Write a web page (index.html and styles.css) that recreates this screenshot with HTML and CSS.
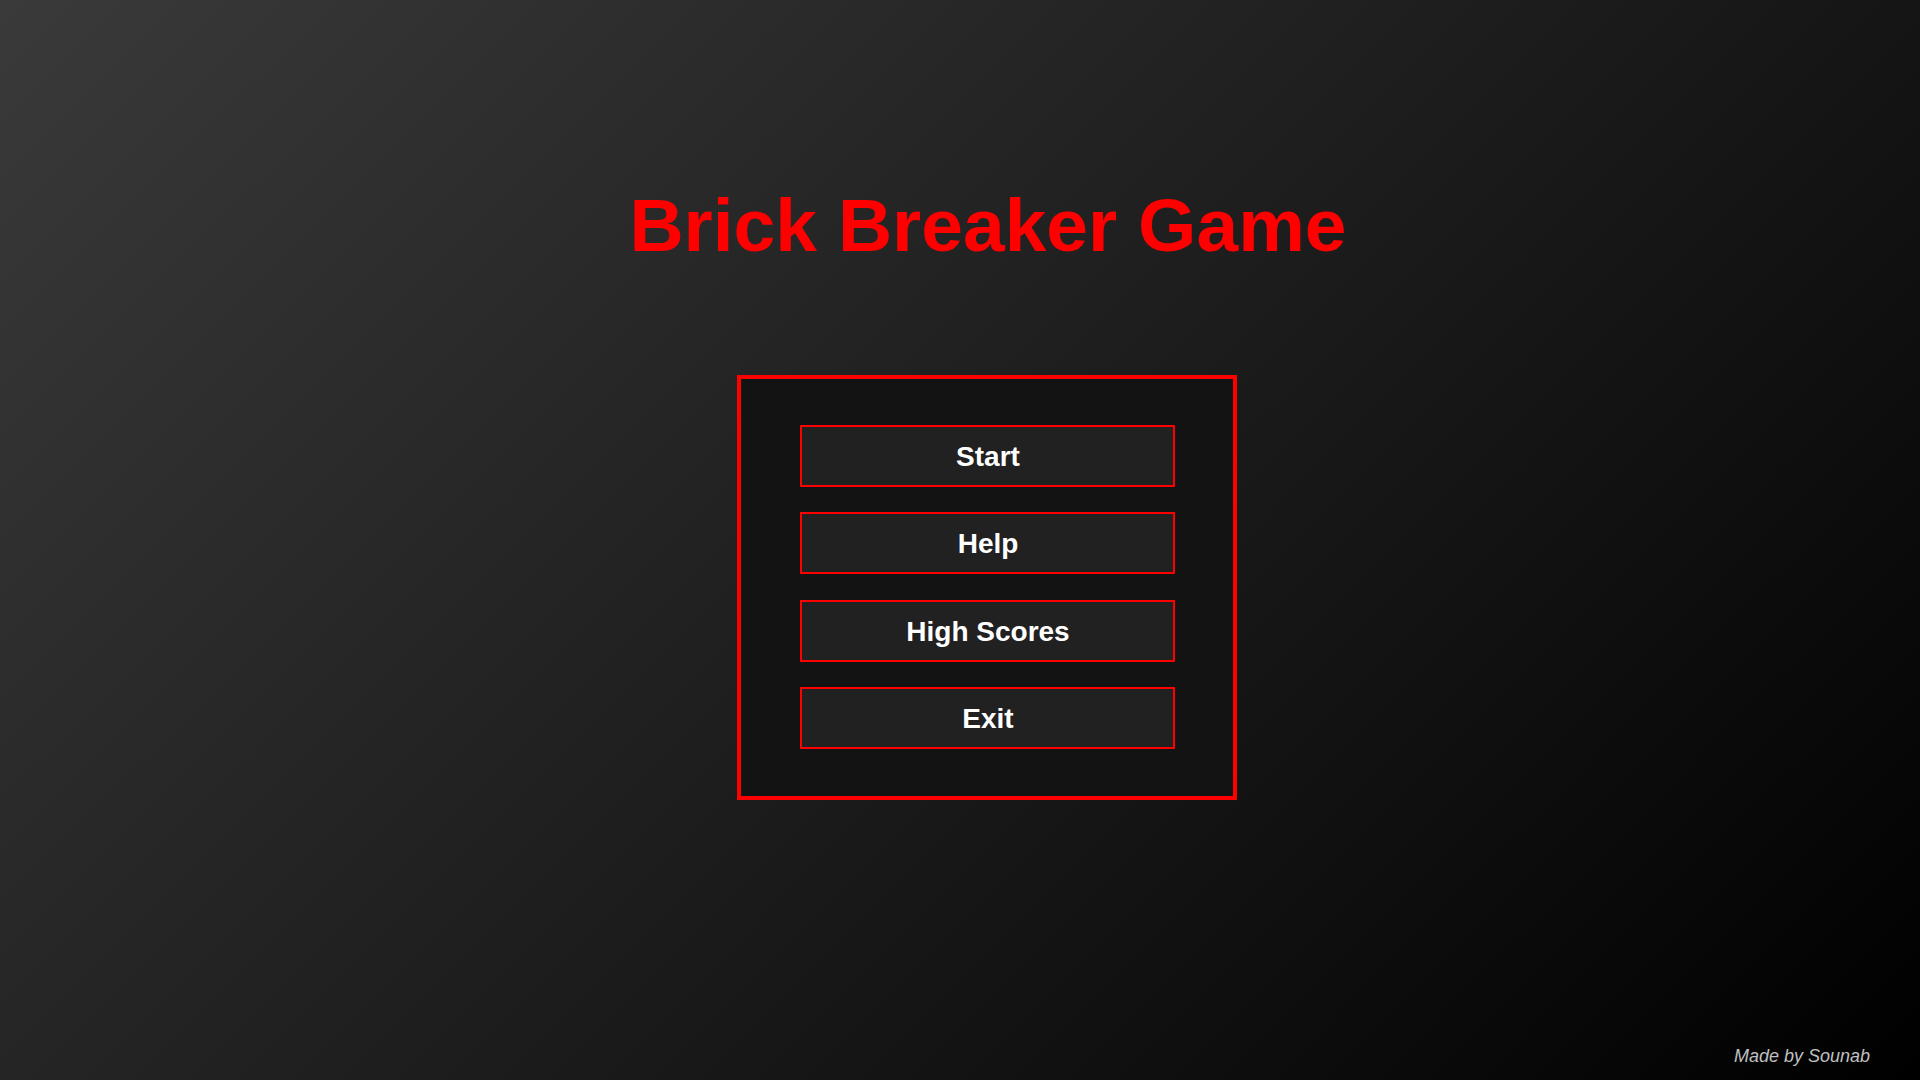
FILE: index.html
```html
<!DOCTYPE html>
<html lang="en">
<head>
<meta charset="utf-8">
<title>Brick Breaker Game</title>
<link rel="stylesheet" href="styles.css">
</head>
<body>
<div class="page">
  <main class="menu-screen">
    <h1 class="title">Brick Breaker Game</h1>
    <div class="menu-box">
      <button class="menu-btn">Start</button>
      <button class="menu-btn">Help</button>
      <button class="menu-btn">High Scores</button>
      <button class="menu-btn">Exit</button>
    </div>
  </main>
  <footer class="credit">Made by Sounab</footer>
</div>
</body>
</html>
```
FILE: styles.css
```css
html, body {
  margin: 0;
  padding: 0;
  height: 100%;
}
body {
  background: linear-gradient(135deg, #3a3a3a 0%, #000000 100%);
  font-family: "Liberation Sans", Arial, sans-serif;
  overflow: hidden;
}
.page {
  height: 100vh;
  display: flex;
  flex-direction: column;
}
.menu-screen {
  flex: 1;
  display: flex;
  flex-direction: column;
  align-items: center;
  padding-top: 182px;
  padding-left: 54px;
}
.title {
  margin: 0;
  padding-left: 2px;
  color: #ff0000;
  font-size: 75px;
  font-weight: bold;
  line-height: 86px;
}
.menu-box {
  margin-top: 107px;
  width: 500px;
  box-sizing: border-box;
  border: 4px solid #ff0000;
  background: #131313;
  padding: 46px 0 47px;
  display: flex;
  flex-direction: column;
  align-items: center;
  gap: 25.33px;
}
.menu-btn {
  width: 375px;
  height: 62px;
  box-sizing: border-box;
  border: 2px solid #ff0000;
  background: #212121;
  color: #ffffff;
  font-family: "Liberation Sans", Arial, sans-serif;
  font-size: 28px;
  font-weight: bold;
  padding: 2px 0 0 2px;
  cursor: pointer;
}
.credit {
  align-self: flex-end;
  color: #c0c0c0;
  font-style: italic;
  font-size: 18px;
  padding: 0 50px 13px 0;
}
```
